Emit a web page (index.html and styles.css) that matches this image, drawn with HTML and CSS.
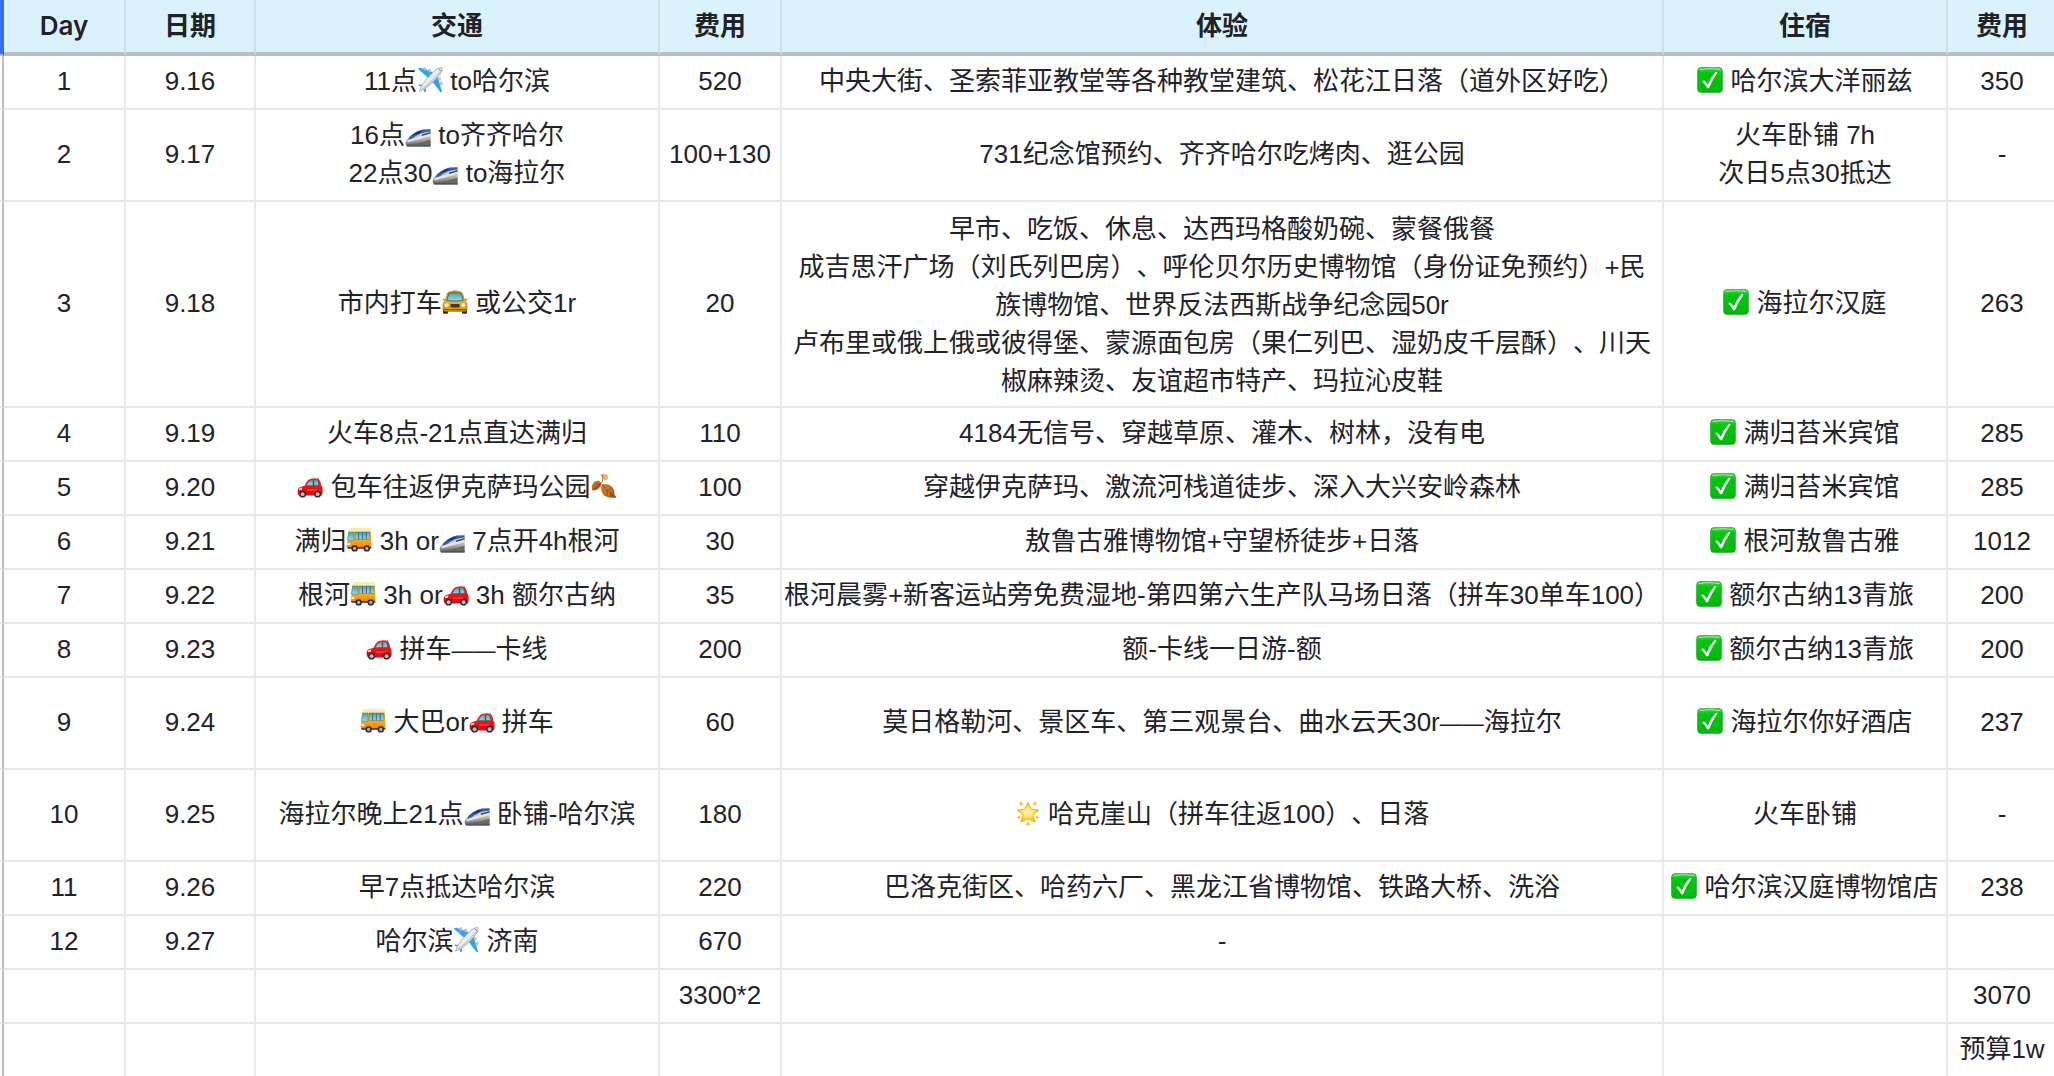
FILE: index.html
```html
<!DOCTYPE html>
<html lang="zh-CN">
<head>
<meta charset="UTF-8">
<title>行程表</title>
<link rel="stylesheet" href="styles.css">
</head>
<body>

<!-- icons -->
<svg class="defs" aria-hidden="true">
  <defs>
    <linearGradient id="g-green" x1="0" y1="0" x2="0" y2="1">
      <stop offset="0" stop-color="#4bd64b"/><stop offset="0.2" stop-color="#06c512"/><stop offset="1" stop-color="#00b80c"/>
    </linearGradient>
    <linearGradient id="g-glass" x1="0" y1="0" x2="0" y2="1">
      <stop offset="0" stop-color="#4d9fb5"/><stop offset="1" stop-color="#93dcea"/>
    </linearGradient>
    <linearGradient id="g-red" x1="0" y1="0" x2="0" y2="1">
      <stop offset="0" stop-color="#f5261c"/><stop offset="1" stop-color="#d90810"/>
    </linearGradient>
    <linearGradient id="g-taxi" x1="0" y1="0" x2="0" y2="1">
      <stop offset="0" stop-color="#f6cf3c"/><stop offset="1" stop-color="#d99a10"/>
    </linearGradient>
    <linearGradient id="g-bus" x1="0" y1="0" x2="0" y2="1">
      <stop offset="0" stop-color="#ffdf30"/><stop offset="0.5" stop-color="#fdb913"/><stop offset="1" stop-color="#f2711c"/>
    </linearGradient>
    <linearGradient id="g-train" x1="0" y1="0" x2="0" y2="1">
      <stop offset="0" stop-color="#e8e8e6"/><stop offset="0.5" stop-color="#bdbcb6"/><stop offset="1" stop-color="#6d6a62"/>
    </linearGradient>
    <linearGradient id="g-leaf" x1="0" y1="0" x2="1" y2="1">
      <stop offset="0" stop-color="#cf8432"/><stop offset="1" stop-color="#9c4a0c"/>
    </linearGradient>
    <radialGradient id="g-star">
      <stop offset="0" stop-color="#fffbd0"/><stop offset="0.5" stop-color="#ffe463"/><stop offset="1" stop-color="#fcb81c"/>
    </radialGradient>
  </defs>

  <symbol id="check" viewBox="0 0 26 26">
    <rect x="0.3" y="0.3" width="25.4" height="25.4" rx="4" fill="#14a01c"/>
    <rect x="0.8" y="0.8" width="24.4" height="24" rx="3.6" fill="url(#g-green)"/>
    <path d="M2.5 2.6Q13 0.6 23.5 2.6" fill="none" stroke="#9aeb9a" stroke-width="1"/>
    <path d="M5.2 14.4L7 13.2Q9.6 15 10.8 17.8Q13.8 10 18.8 4.8L20.6 5.4Q15.4 12.6 12 21.2H10.2Q8.4 17.4 5.2 14.4Z" fill="#fff"/>
  </symbol>

  <symbol id="plane" viewBox="0 0 26 26">
    <path d="M0.6 1.4L3.4 0.8L18 6.2L12 11.6Z" fill="#2fa4ea"/>
    <path d="M25 24.6L23.8 25.6L14.6 13.6L20 8Z" fill="#2fa4ea"/>
    <path d="M0.8 18.2L2.4 17.6L8 18.4L5.6 20Z" fill="#35a0e2"/>
    <path d="M7.6 25.4L9.2 24.2L8 18.4L6 20.4Z" fill="#35a0e2"/>
    <path d="M6.2 1.2l2.4-0.6 1 2.4-2 0.8zM11 2.6l2.4-0.4 0.8 2.4-2 0.8zM24.4 18.4l1.2-2.4-2.4-1-1 2zM22.8 13.4l1-2.4-2.2-0.8-1 2z" fill="#c9ced2" stroke="#8d959c" stroke-width="0.4"/>
    <path d="M2.4 24.2Q4 18.4 9 12.6L17.6 3.6Q21.8 0 25 0.6Q26.2 3.6 22.4 8.2L13.8 17.4Q8.2 22.6 2.4 24.2Z" fill="#e9ecee" stroke="#8e979e" stroke-width="0.7"/>
    <path d="M5 22.4Q12 18 23.6 4.8" fill="none" stroke="#c2c7cb" stroke-width="1.4"/>
    <path d="M21.6 1.8L24.2 4.4" stroke="#59636c" stroke-width="0.8"/>
  </symbol>

  <symbol id="train" viewBox="0 0 26 26">
    <path d="M0.6 22Q1 19 6 14.6Q12.4 9.4 18 8.6L25.6 8.2V25.2H2Q0.4 24 0.6 22Z" fill="url(#g-train)"/>
    <path d="M6 14.6Q12.4 9.4 18 8.6L25.6 8.2V10.6Q15 11.4 7.4 17.4L3.4 18.4Q4 16.4 6 14.6Z" fill="#2f5fb4"/>
    <path d="M7 14.8Q12 10.4 17.6 9.8L14 12.2Q9.8 13.6 7 14.8Z" fill="#18243f"/>
    <path d="M2 19.8Q12 16.2 25.6 11.6V15Q14 18.6 3 21.2Z" fill="#e4e5e5"/>
    <path d="M17 13.6L25.6 11V12.6L17 15Z" fill="#3c4656"/>
    <path d="M1.4 23.2Q14 22.6 25.6 18.4V25.2H2Z" fill="#605d56" opacity="0.7"/>
    <path d="M1.6 24.6H25.6V25.6H2Z" fill="#2b4c86"/>
  </symbol>

  <symbol id="taxi" viewBox="0 0 26 26">
    <rect x="10.4" y="1.2" width="5.2" height="2.4" rx="0.8" fill="#e8a913"/>
    <rect x="1" y="19.4" width="5" height="5.4" rx="1" fill="#2b2b2b"/>
    <rect x="20" y="19.4" width="5" height="5.4" rx="1" fill="#2b2b2b"/>
    <path d="M5.6 4Q6.4 2.8 8 2.8H18Q19.6 2.8 20.4 4L22.8 12Q25 13 25 16V20.6Q25 22.4 23 22.4H3Q1 22.4 1 20.6V16Q1 13 3.2 12Z" fill="url(#g-taxi)" stroke="#8a6a14" stroke-width="0.6"/>
    <path d="M6.6 4.6Q7 3.8 8 3.8H18Q19 3.8 19.4 4.6L21.2 11.6Q13 12.6 4.8 11.6Z" fill="url(#g-glass)" stroke="#3b4c50" stroke-width="0.8"/>
    <path d="M0.4 9.8h3.2l0.6 2H1zM25.6 9.8h-3.2l-0.6 2H25z" fill="#d99d18"/>
    <rect x="8.4" y="15" width="9.2" height="3.4" rx="1" fill="#3b3a34"/>
    <circle cx="4.6" cy="16.2" r="1.9" fill="#fdf6cf"/>
    <circle cx="21.4" cy="16.2" r="1.9" fill="#fdf6cf"/>
    <path d="M2 20.6H24" stroke="#7a5c10" stroke-width="1.2"/>
  </symbol>

  <symbol id="car" viewBox="0 0 26 26">
    <path d="M21.6 5.8L20.8 4.6" stroke="#999" stroke-width="0.8"/>
    <path d="M0.6 19Q0.4 15 3.4 14L7.6 12.8Q10 7.2 13 6Q17.6 4.4 21.6 5.8Q23.6 8 24.2 12.4Q25.8 13.4 25.6 17.4Q25.8 21.6 24.4 22.4H2Q0.6 22 0.6 19Z" fill="url(#g-red)"/>
    <path d="M9.2 12.6Q11 8.2 13.4 7.2L16 6.6V12.6Z" fill="url(#g-glass)" stroke="#464f52" stroke-width="0.5"/>
    <path d="M17 6.6Q19.4 6.4 20.6 7.2L21.8 12.2L17 12.6Z" fill="url(#g-glass)" stroke="#464f52" stroke-width="0.5"/>
    <path d="M2 15.6L5.4 14.4L5 16.6L2 17.2Z" fill="#ffe9d8"/>
    <path d="M10 17H20" stroke="#ff6f5c" stroke-width="0.8"/>
    <circle cx="5.6" cy="21.2" r="3.4" fill="#2d2d30"/><circle cx="5.6" cy="21.2" r="1.9" fill="#b9bcc0"/>
    <circle cx="20.6" cy="21.2" r="3.4" fill="#2d2d30"/><circle cx="20.6" cy="21.2" r="1.9" fill="#b9bcc0"/>
  </symbol>

  <symbol id="bus" viewBox="0 0 26 26">
    <path d="M2.6 3Q3 1.2 5 1H22.6Q24.6 1.2 25 3L25.4 20Q25.4 22 24 22H2.4Q0.8 22 0.8 19.6Z" fill="url(#g-bus)"/>
    <path d="M2.6 3Q3 1 5 0.8H22.6Q24.6 1 25 3V5H2.4Z" fill="#f7edb4"/>
    <path d="M2.6 5H8V13.4Q4 14 1.4 13Z" fill="url(#g-glass)" stroke="#5a6a60" stroke-width="0.5"/>
    <path d="M9 5H24V12.4H9Z" fill="url(#g-glass)" stroke="#5a6a60" stroke-width="0.5"/>
    <path d="M12.6 5V12.4M16.4 5V12.4M20.2 5V12.4" stroke="#38565e" stroke-width="0.8"/>
    <path d="M0.9 20H25.3V21.8H2Z" fill="#5b4b3c"/>
    <path d="M1.4 16.2L4.4 16V18L1.4 18.2Z" fill="#fff7d2"/>
    <circle cx="8.6" cy="21.4" r="3.2" fill="#2d2d30"/><circle cx="8.6" cy="21.4" r="1.6" fill="#aeb2b5"/>
    <circle cx="20.8" cy="21.4" r="3.2" fill="#2d2d30"/><circle cx="20.8" cy="21.4" r="1.6" fill="#aeb2b5"/>
  </symbol>

  <symbol id="leaf" viewBox="0 0 26 26">
    <path d="M9 1.4Q15 -0.4 17.6 3.4Q16.4 7.4 13 7.8Q12.6 3.6 9 1.4Z" fill="#efb660"/>
    <path d="M8 7.8Q10.8 9.6 9.6 13.2Q6.6 17.6 1.4 17.4Q-0.4 12 3.2 9Q5.4 7.4 8 7.8Z" fill="url(#g-leaf)"/>
    <path d="M10.6 11.8Q16.8 9.6 21.2 14Q24 17.4 23.4 21.6L25.4 24.4Q15.6 25.6 12.2 21.6Q9.2 17.6 10.6 11.8Z" fill="url(#g-leaf)"/>
    <path d="M11 2Q13.4 7 9.6 10.4Q6 14.4 2 16.8M9.8 10.4Q14.6 17 24.4 24" fill="none" stroke="#7d3b08" stroke-width="0.8"/>
    <path d="M14.6 15.6L19 14.6M17.6 18.8L22 18M14 15.6V21M17.4 18.8L17.8 23.4" stroke="#e09c50" stroke-width="0.6"/>
  </symbol>

  <symbol id="star" viewBox="0 0 26 26">
    <path d="M13 2.2L16.2 9.4L24 10L18 15.2L20.2 22L13 18.8L5.8 22L8 15.2L2 10L9.8 9.4Z" fill="url(#g-star)" stroke="#f5b01c" stroke-width="1" stroke-linejoin="round"/>
    <path d="M4.4 1.4L8.4 3.8L5.8 6.2ZM21.6 1.4L17.6 3.8L20.2 6.2ZM1.4 17.6L5 15.6L4.8 18.8ZM24.6 17.6L21 15.6L21.2 18.8ZM13 20.8L15 25.2H11Z" fill="#f9b52c"/>
  </symbol>
</svg>

<table class="sheet">
  <colgroup>
    <col class="c-mark">
    <col class="c-day">
    <col class="c-date">
    <col class="c-way">
    <col class="c-cost">
    <col class="c-plan">
    <col class="c-stay">
    <col class="c-price">
  </colgroup>
  <thead>
    <tr>
      <th>Day</th>
      <th>日期</th>
      <th>交通</th>
      <th>费用</th>
      <th>体验</th>
      <th>住宿</th>
      <th>费用</th>
    </tr>
  </thead>
  <tbody>
    <tr>
      <td>1</td>
      <td>9.16</td>
      <td>11点<svg class="emoji"><use href="#plane"/></svg> to哈尔滨</td>
      <td>520</td>
      <td>中央大街、圣索菲亚教堂等各种教堂建筑、松花江日落（道外区好吃）</td>
      <td><svg class="emoji"><use href="#check"/></svg> 哈尔滨大洋丽兹</td>
      <td>350</td>
    </tr>
    <tr>
      <td>2</td>
      <td>9.17</td>
      <td>16点<svg class="emoji"><use href="#train"/></svg> to齐齐哈尔<br>22点30<svg class="emoji"><use href="#train"/></svg> to海拉尔</td>
      <td>100+130</td>
      <td>731纪念馆预约、齐齐哈尔吃烤肉、逛公园</td>
      <td>火车卧铺 7h<br>次日5点30抵达</td>
      <td>-</td>
    </tr>
    <tr>
      <td>3</td>
      <td>9.18</td>
      <td>市内打车<svg class="emoji"><use href="#taxi"/></svg> 或公交1r</td>
      <td>20</td>
      <td class="wrap">早市、吃饭、休息、达西玛格酸奶碗、蒙餐俄餐<br>成吉思汗广场（刘氏列巴房）、呼伦贝尔历史博物馆（身份证免预约）+民族博物馆、世界反法西斯战争纪念园50r<br>卢布里或俄上俄或彼得堡、蒙源面包房（果仁列巴、湿奶皮千层酥）、川天椒麻辣烫、友谊超市特产、玛拉沁皮鞋</td>
      <td><svg class="emoji"><use href="#check"/></svg> 海拉尔汉庭</td>
      <td>263</td>
    </tr>
    <tr>
      <td>4</td>
      <td>9.19</td>
      <td>火车8点-21点直达满归</td>
      <td>110</td>
      <td>4184无信号、穿越草原、灌木、树林，没有电</td>
      <td><svg class="emoji"><use href="#check"/></svg> 满归苔米宾馆</td>
      <td>285</td>
    </tr>
    <tr>
      <td>5</td>
      <td>9.20</td>
      <td><svg class="emoji"><use href="#car"/></svg> 包车往返伊克萨玛公园<svg class="emoji"><use href="#leaf"/></svg> </td>
      <td>100</td>
      <td>穿越伊克萨玛、激流河栈道徒步、深入大兴安岭森林</td>
      <td><svg class="emoji"><use href="#check"/></svg> 满归苔米宾馆</td>
      <td>285</td>
    </tr>
    <tr>
      <td>6</td>
      <td>9.21</td>
      <td>满归<svg class="emoji"><use href="#bus"/></svg> 3h or<svg class="emoji"><use href="#train"/></svg> 7点开4h根河</td>
      <td>30</td>
      <td>敖鲁古雅博物馆+守望桥徒步+日落</td>
      <td><svg class="emoji"><use href="#check"/></svg> 根河敖鲁古雅</td>
      <td>1012</td>
    </tr>
    <tr>
      <td>7</td>
      <td>9.22</td>
      <td>根河<svg class="emoji"><use href="#bus"/></svg> 3h or<svg class="emoji"><use href="#car"/></svg> 3h 额尔古纳</td>
      <td>35</td>
      <td class="full">根河晨雾+新客运站旁免费湿地-第四第六生产队马场日落（拼车30单车100）</td>
      <td><svg class="emoji"><use href="#check"/></svg> 额尔古纳13青旅</td>
      <td>200</td>
    </tr>
    <tr>
      <td>8</td>
      <td>9.23</td>
      <td><svg class="emoji"><use href="#car"/></svg> 拼车<span class="dash">——</span>卡线</td>
      <td>200</td>
      <td>额-卡线一日游-额</td>
      <td><svg class="emoji"><use href="#check"/></svg> 额尔古纳13青旅</td>
      <td>200</td>
    </tr>
    <tr class="tall">
      <td>9</td>
      <td>9.24</td>
      <td><svg class="emoji"><use href="#bus"/></svg> 大巴or<svg class="emoji"><use href="#car"/></svg> 拼车</td>
      <td>60</td>
      <td>莫日格勒河、景区车、第三观景台、曲水云天30r<span class="dash">——</span>海拉尔</td>
      <td><svg class="emoji"><use href="#check"/></svg> 海拉尔你好酒店</td>
      <td>237</td>
    </tr>
    <tr class="tall">
      <td>10</td>
      <td>9.25</td>
      <td>海拉尔晚上21点<svg class="emoji"><use href="#train"/></svg> 卧铺-哈尔滨</td>
      <td>180</td>
      <td><svg class="emoji"><use href="#star"/></svg> 哈克崖山（拼车往返100）、日落</td>
      <td>火车卧铺</td>
      <td>-</td>
    </tr>
    <tr>
      <td>11</td>
      <td>9.26</td>
      <td>早7点抵达哈尔滨</td>
      <td>220</td>
      <td>巴洛克街区、哈药六厂、黑龙江省博物馆、铁路大桥、洗浴</td>
      <td><svg class="emoji"><use href="#check"/></svg> 哈尔滨汉庭博物馆店</td>
      <td>238</td>
    </tr>
    <tr>
      <td>12</td>
      <td>9.27</td>
      <td>哈尔滨<svg class="emoji"><use href="#plane"/></svg> 济南</td>
      <td>670</td>
      <td>-</td>
      <td></td>
      <td></td>
    </tr>
    <tr>
      <td></td>
      <td></td>
      <td></td>
      <td>3300*2</td>
      <td></td>
      <td></td>
      <td>3070</td>
    </tr>
    <tr>
      <td></td>
      <td></td>
      <td></td>
      <td></td>
      <td></td>
      <td></td>
      <td>预算1w</td>
    </tr>
  </tbody>
</table>

</body>
</html>
```

FILE: styles.css
```css
* { box-sizing: border-box; }

body {
  margin: 0;
  background: #fff;
  color: #1f2329;
  font-family: "Liberation Sans", "Noto Sans CJK SC", sans-serif;
  font-size: 26px;
  line-height: 38px;
  text-spacing-trim: space-all;
}

.defs { position: absolute; width: 0; height: 0; }

.emoji {
  width: 26px;
  height: 26px;
  vertical-align: -3px;
}
.dash { font-size: 22px; line-height: 1; }

.sheet {
  width: 100%;
  table-layout: fixed;
  border-collapse: separate;
  border-spacing: 0;
}

.c-mark  { width: 4px; }
.c-day   { width: 122px; }
.c-date  { width: 130px; }
.c-way   { width: 404px; }
.c-cost  { width: 122px; }
.c-stay  { width: 284px; }
.c-price { width: 106px; }

.sheet th, .sheet td {
  height: 54px;
  padding: 6px 7px 8px;
  border-right: 2px solid #e7e8e8;
  border-bottom: 2px solid #e7e8e8;
  text-align: center;
  vertical-align: middle;
  white-space: nowrap;
}
.sheet th {
  height: 56px;
  padding: 7px;
  background: #d9f2fb;
  border-right-color: #c8dfe8;
  border-bottom: 4px solid #babdc6;
  font-family: Inter, "Noto Sans CJK SC", sans-serif;
  font-weight: 600;
}
.sheet th:last-child, .sheet td:last-child { border-right: 0; padding-left: 9px; }
.sheet tbody tr:last-child td { height: 52px; border-bottom: 0; }
.sheet .tall td { height: 92px; }
.sheet .wrap { padding-top: 8px; padding-bottom: 6px; white-space: normal; }
.sheet .full { padding-left: 0; padding-right: 0; }

/* frozen edge on the left */
.sheet tr::before {
  content: "";
  display: table-cell;
  border-right: 2px solid #babdc6;
  border-bottom: 2px solid #e7e8e8;
}
.sheet thead tr::before {
  background: #336df4;
  border-right-color: #336df4;
  border-bottom-color: #babdc6;
}
.sheet tbody tr:last-child::before { border-bottom: 0; }
```
